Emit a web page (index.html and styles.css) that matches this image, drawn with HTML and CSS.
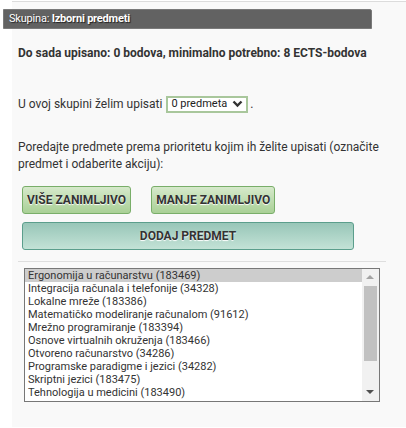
FILE: index.html
```html
<!DOCTYPE html>
<html>
<head>
<meta charset="utf-8">
<link rel="stylesheet" href="styles.css">
</head>
<body>
<div class="panel">
  <div class="header">Skupina: <b>Izborni predmeti</b></div>
  <p class="summary">Do sada upisano: 0 bodova, minimalno potrebno: 8 ECTS-bodova</p>
  <p class="choose">U ovoj skupini želim upisati <span class="sel">0 predmeta <svg class="chev" width="11" height="8" viewBox="0 0 11 8"><path d="M1.5 1.5 L5.5 5.5 L9.5 1.5" fill="none" stroke="#333" stroke-width="2.4"/></svg></span>.</p>
  <p class="instr">Poredajte predmete prema prioritetu kojim ih želite upisati (označite predmet i odaberite akciju):</p>
  <div class="btnrow">
    <button class="btn green">VIŠE ZANIMLJIVO</button>
    <button class="btn green">MANJE ZANIMLJIVO</button>
  </div>
  <button class="btn teal wide">DODAJ PREDMET</button>
  <hr class="sep">
  <div class="list">
    <ul class="items">
      <li class="selected">Ergonomija u računarstvu (183469)</li>
      <li>Integracija računala i telefonije (34328)</li>
      <li>Lokalne mreže (183386)</li>
      <li>Matematičko modeliranje računalom (91612)</li>
      <li>Mrežno programiranje (183394)</li>
      <li>Osnove virtualnih okruženja (183466)</li>
      <li>Otvoreno računarstvo (34286)</li>
      <li>Programske paradigme i jezici (34282)</li>
      <li>Skriptni jezici (183475)</li>
      <li>Tehnologija u medicini (183490)</li>
    </ul>
    <div class="scrollbar">
      <div class="arrow up"></div>
      <div class="track"><div class="thumb"></div></div>
      <div class="arrow down"></div>
    </div>
  </div>
</div>
</body>
</html>
```
FILE: styles.css
```css
html, body {
  margin: 0;
  padding: 0;
  background: #ffffff;
}
body {
  font-family: Roboto, "Liberation Sans", sans-serif;
  color: #333;
  height: 428px;
  overflow: hidden;
}
.panel {
  margin-left: 12px;
  margin-top: 1px;
  border-top: 1px solid #dcdcdc;
  background: #f9f9f9;
  height: 426px;
  padding-top: 7px;
  box-sizing: border-box;
}
.header {
  margin-left: -9px;
  width: 369px;
  height: 20px;
  box-sizing: border-box;
  background: #626262;
  border: 1px solid #7a7a7a;
  border-radius: 0 2px 0 0;
  color: #fff;
  font-size: 11px;
  line-height: 18px;
  padding-left: 5px;
  text-shadow: 1px 1px 1px #222;
  letter-spacing: -0.2px;
}
.header b { font-weight: bold; }
p { margin: 0; }
.summary {
  margin: 16px 0 0 6px;
  font-size: 12px;
  font-weight: bold;
  line-height: 16px;
}
.choose {
  margin: 34px 0 0 6px;
  font-size: 12px;
  line-height: 18px;
  display: flex;
  align-items: center;
}
.sel {
  display: inline-flex;
  align-items: center;
  gap: 5px;
  margin-left: 4px;
  margin-right: 2px;
  height: 17px;
  box-sizing: border-box;
  border: 2px solid #a9c79c;
  background: #fff;
  padding: 0 3px 0 3px;
  font-size: 11px;
  color: #222;
}
.instr {
  margin: 26px 0 0 6px;
  font-size: 12px;
  line-height: 17px;
  width: 376px;
}
.btnrow {
  display: flex;
  gap: 20px;
  margin: 13px 0 0 10px;
}
.btn {
  font-family: Roboto, "Liberation Sans", sans-serif;
  font-weight: bold;
  font-size: 12px;
  color: #333;
  text-shadow: 0 1px 1px #fff;
  border-radius: 3px;
  height: 28px;
  padding: 0 4px;
  cursor: pointer;
}
.green {
  background: linear-gradient(#d6e9cb, #a9d096);
  border: 1px solid #79ae69;
}
.teal {
  background: linear-gradient(#98c6b8, #c3e2d6);
  border: 1px solid #5b9e8c;
}
.wide {
  display: block;
  width: 332px;
  margin: 8px 0 0 10px;
}
.sep {
  border: 0;
  border-top: 1px solid #dedede;
  margin: 11px 0 0 6px;
  width: 368px;
}
.list {
  display: flex;
  margin: 6px 0 0 12px;
  width: 356px;
  height: 134px;
  box-sizing: border-box;
  border: 1px solid #777;
  background: #fff;
}
.items {
  flex: 1;
  list-style: none;
  margin: 0;
  padding: 0;
  font-size: 11px;
  color: #333;
}
.items li {
  padding: 0 3px;
  line-height: 13px;
  height: 13px;
  white-space: nowrap;
}
.items li.selected {
  background: #cdcdcd;
}
.scrollbar {
  width: 17px;
  display: flex;
  flex-direction: column;
  background: #f1f1f1;
}
.arrow {
  height: 17px;
  position: relative;
}
.arrow::after {
  content: "";
  position: absolute;
  left: 4px;
  top: 6px;
  border-left: 4px solid transparent;
  border-right: 4px solid transparent;
}
.arrow.up::after {
  border-bottom: 4px solid #a3a3a3;
}
.arrow.down::after {
  border-top: 4px solid #505050;
}
.track {
  flex: 1;
  padding: 0 2px;
}
.thumb {
  height: 75px;
  background: #c1c1c1;
}
```
